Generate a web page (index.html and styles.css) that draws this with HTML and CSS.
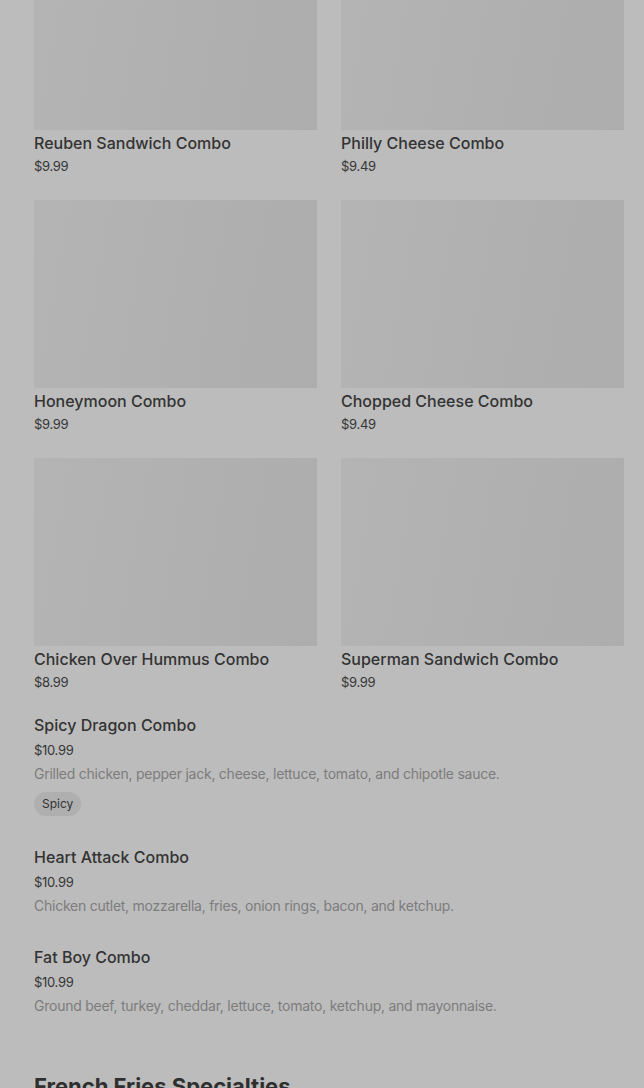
FILE: index.html
```html
<!DOCTYPE html>
<html lang="en">
<head>
    <meta charset="UTF-8">
    <meta name="viewport" content="width=device-width, initial-scale=1.0">
    <title>Menu - Combos</title>
    <link rel="stylesheet" href="styles.css">
</head>
<body>
    <div class="menu">
        <div class="grid">
            <div class="card">
                <div class="thumb"></div>
                <h3>Reuben Sandwich Combo</h3>
                <p class="price">$9.99</p>
            </div>
            <div class="card">
                <div class="thumb"></div>
                <h3>Philly Cheese Combo</h3>
                <p class="price">$9.49</p>
            </div>
            <div class="card">
                <div class="thumb"></div>
                <h3>Honeymoon Combo</h3>
                <p class="price">$9.99</p>
            </div>
            <div class="card">
                <div class="thumb"></div>
                <h3>Chopped Cheese Combo</h3>
                <p class="price">$9.49</p>
            </div>
            <div class="card">
                <div class="thumb"></div>
                <h3>Chicken Over Hummus Combo</h3>
                <p class="price">$8.99</p>
            </div>
            <div class="card">
                <div class="thumb"></div>
                <h3>Superman Sandwich Combo</h3>
                <p class="price">$9.99</p>
            </div>
        </div>

        <div class="list">
            <div class="item">
                <h3>Spicy Dragon Combo</h3>
                <p class="price">$10.99</p>
                <p class="desc">Grilled chicken, pepper jack, cheese, lettuce, tomato, and chipotle sauce.</p>
                <span class="tag">Spicy</span>
            </div>
            <div class="item">
                <h3>Heart Attack Combo</h3>
                <p class="price">$10.99</p>
                <p class="desc">Chicken cutlet, mozzarella, fries, onion rings, bacon, and ketchup.</p>
            </div>
            <div class="item">
                <h3>Fat Boy Combo</h3>
                <p class="price">$10.99</p>
                <p class="desc">Ground beef, turkey, cheddar, lettuce, tomato, ketchup, and mayonnaise.</p>
            </div>
        </div>

        <h2 class="section-title">French Fries Specialties</h2>
    </div>
</body>
</html>
```

FILE: styles.css
```css
* {
    margin: 0;
    padding: 0;
    box-sizing: border-box;
    font-family: Inter, 'Noto Sans', sans-serif;
}

body {
    background: #bcbcbc;
    color: #2f2f2f;
    overflow: hidden;
}

.menu {
    margin-top: -58px;
    padding: 0 20px 0 34px;
}

.grid {
    display: grid;
    grid-template-columns: 1fr 1fr;
    column-gap: 24px;
    row-gap: 24px;
}

.thumb {
    height: 188px;
    background: linear-gradient(100deg, #b4b4b4, #adadad);
}

.card h3,
.item h3 {
    font-size: 16px;
    font-weight: 500;
    line-height: 20px;
    color: #333;
}

.card h3 {
    margin-top: 3px;
}

.price {
    font-size: 13px;
    line-height: 20px;
    color: #363636;
    letter-spacing: -0.3px;
    margin-top: 3px;
}

.list {
    display: flex;
    flex-direction: column;
    gap: 31px;
    margin-top: 23px;
}

.item .price {
    margin-top: 5px;
}

.desc {
    font-size: 14px;
    line-height: 20px;
    letter-spacing: -0.25px;
    color: #7c7c7c;
    margin-top: 4px;
}

.tag {
    display: inline-block;
    margin-top: 8px;
    padding: 0 8px;
    height: 24px;
    line-height: 24px;
    border-radius: 12px;
    background: #afafaf;
    font-size: 12px;
    color: #333;
}

.section-title {
    margin-top: 54px;
    font-size: 22px;
    font-weight: 700;
    line-height: 32px;
    color: #2f2f2f;
}
```
